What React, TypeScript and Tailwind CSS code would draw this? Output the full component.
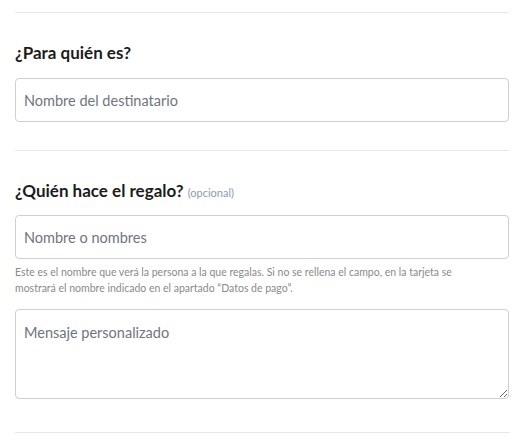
import React from "react";

const Divider = () => <hr className="border-0 border-t border-[#e8e8e8] m-0" />;

export default function App() {
  return (
    <div className="w-[524px] h-[446px] bg-white px-[15px] pt-[12px] font-['Lato',sans-serif] text-[#1c1c1c]">
      <Divider />
      <section className="pt-[29px] pb-[28px]">
        <h2 className="text-[17px] font-bold leading-[22px] mb-[14px]">¿Para quién es?</h2>
        <input
          type="text"
          placeholder="Nombre del destinatario"
          className="block w-full h-[44px] px-[8px] rounded-[4px] border border-[#cfcfcf] text-[14.5px] placeholder:text-[#6e7580] outline-none"
        />
      </section>
      <Divider />
      <section className="pt-[29px] pb-[33px]">
        <h2 className="h-[22px] text-[17px] font-bold leading-[22px] mb-[13px]">
          ¿Quién hace el regalo?{" "}
          <span className="text-[11px] leading-none font-normal text-[#8d9ab0]">(opcional)</span>
        </h2>
        <input
          type="text"
          placeholder="Nombre o nombres"
          className="block w-full h-[44px] px-[8px] rounded-[4px] border border-[#cfcfcf] text-[14.5px] placeholder:text-[#6e7580] outline-none"
        />
        <p className="mt-[5px] mb-[13px] text-[10.5px] leading-[16px] text-[#8a8a8a] whitespace-nowrap">
          Este es el nombre que verá la persona a la que regalas. Si no se rellena el campo, en la tarjeta se
          <br />
          mostrará el nombre indicado en el apartado “Datos de pago”.
        </p>
        <textarea
          placeholder="Mensaje personalizado"
          className="block w-full h-[90px] px-[8px] pt-[12px] rounded-[4px] border border-[#cfcfcf] text-[14.5px] placeholder:text-[#6e7580] outline-none"
        />
      </section>
      <Divider />
    </div>
  );
}
